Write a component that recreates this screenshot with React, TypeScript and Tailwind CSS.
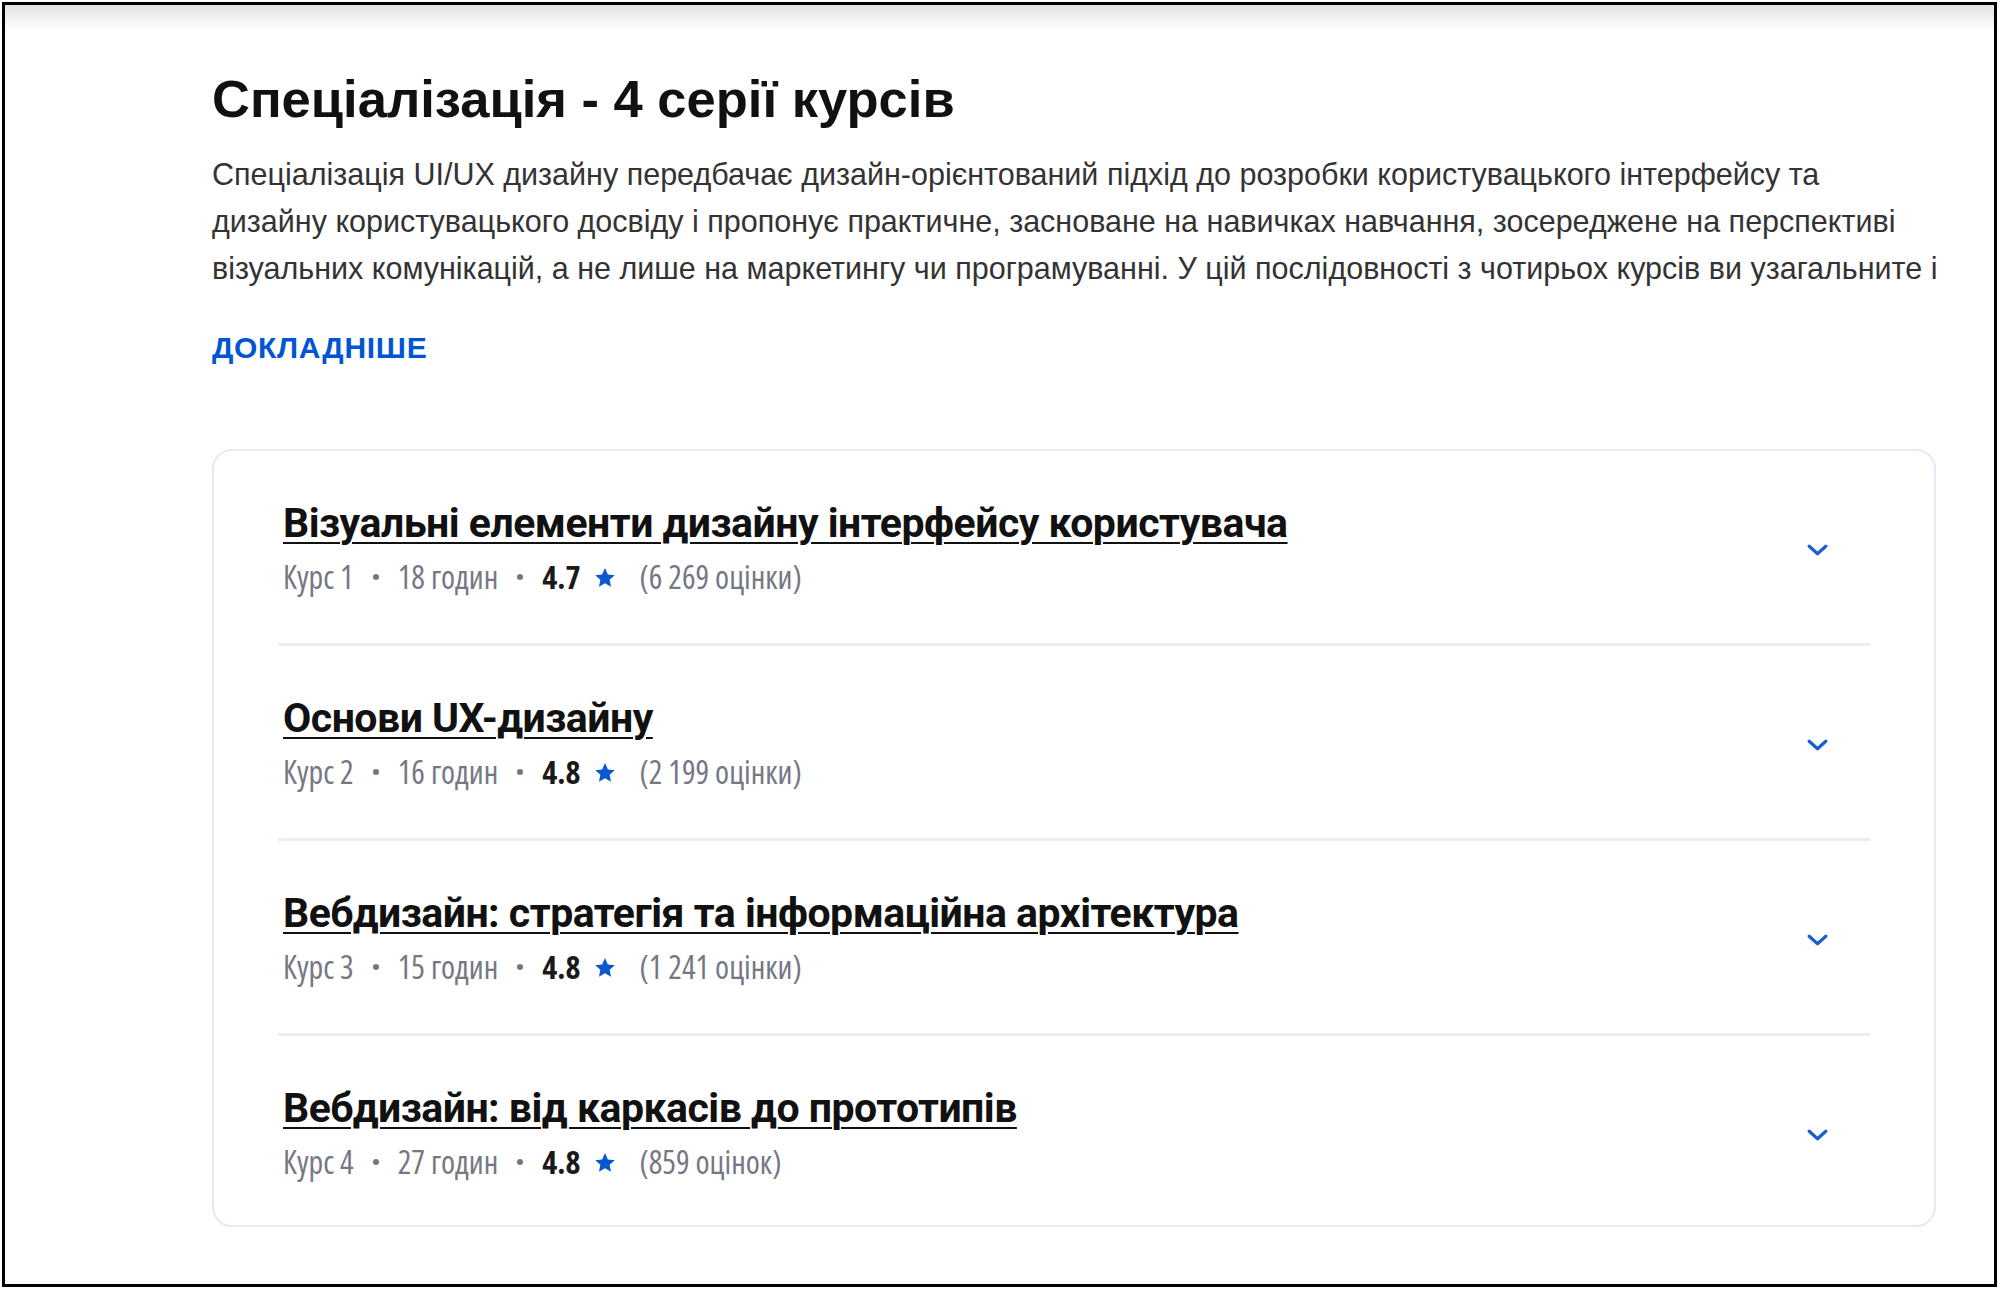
const courses = [
  { title: 'Візуальні елементи дизайну інтерфейсу користувача', n: 1, hours: 18, rating: '4.7', votes: '6 269 оцінки' },
  { title: 'Основи UX-дизайну', n: 2, hours: 16, rating: '4.8', votes: '2 199 оцінки' },
  { title: 'Вебдизайн: стратегія та інформаційна архітектура', n: 3, hours: 15, rating: '4.8', votes: '1 241 оцінки' },
  { title: 'Вебдизайн: від каркасів до прототипів', n: 4, hours: 27, rating: '4.8', votes: '859 оцінок' },
]

function Star() {
  return (
    <svg width="22" height="21" viewBox="0 0 24 23" className="shrink-0">
      <path
        d="M12 1.2l3.2 6.9 7.5.9-5.6 5.1 1.5 7.4L12 17.8l-6.6 3.7 1.5-7.4L1.3 9l7.5-.9z"
        fill="#0b57d0"
      />
    </svg>
  )
}

function Chevron() {
  return (
    <svg width="21" height="12" viewBox="0 0 21 12" fill="none">
      <path d="M2.2 2.2l8.3 7.6 8.3-7.6" stroke="#1a5fd0" strokeWidth="3.2" strokeLinecap="round" strokeLinejoin="round" />
    </svg>
  )
}

function Dot() {
  return <span className="h-[6px] w-[6px] shrink-0 rounded-full bg-[#74767f]" />
}

function CourseRow({ course, last }: { course: (typeof courses)[number]; last: boolean }) {
  return (
    <div
      className={`flex items-center justify-between pt-[43px] ${
        last ? 'pb-[43px]' : 'pb-[46px] border-b-[3px] border-[#e9edf5]'
      }`}
    >
      <div className="flex flex-col gap-[5px] pl-[5px]">
        <a
          href="#"
          className="font-['Roboto',sans-serif] text-[41px] leading-[58px] font-bold tracking-[-0.5px] text-[#111] underline decoration-[2px] underline-offset-[5px]"
        >
          {course.title}
        </a>
        <div className="flex items-center gap-[19px] font-['Open_Sans',sans-serif] text-[32px] leading-[40px] text-[#757884] font-stretch-[82%]">
          <span>Курс {course.n}</span>
          <Dot />
          <span>{course.hours} годин</span>
          <Dot />
          <span className="flex items-center gap-[13px]">
            <span className="font-bold text-[#1a1a1a]">{course.rating}</span>
            <Star />
          </span>
          <span className="ml-[5px]">({course.votes})</span>
        </div>
      </div>
      <button className="mr-[33px] mt-[8px] flex h-[40px] w-[40px] items-center justify-center">
        <Chevron />
      </button>
    </div>
  )
}

export default function App() {
  return (
    <div className="h-[1290px] w-[2000px] bg-white pt-[2px] pr-[3px] pb-[3px] pl-[2px]">
      <div className="h-full overflow-hidden border-[3px] border-black bg-white">
        <div className="h-[26px] bg-gradient-to-b from-[#e2e2e2] to-white" />
        <div className="ml-[207px] mt-[39px] w-[1724px] font-['Liberation_Sans',Arial,sans-serif]">
          <h2 className="text-[52.5px] leading-[58px] font-bold text-[#111]">
            Спеціалізація - 4 серії курсів
          </h2>
          <p className="mt-[23px] text-[30.5px] leading-[47px] whitespace-nowrap text-[#333]">
            Спеціалізація UI/UX дизайну передбачає дизайн-орієнтований підхід до розробки користувацького інтерфейсу та
            <br />
            дизайну користувацького досвіду і пропонує практичне, засноване на навичках навчання, зосереджене на перспективі
            <br />
            візуальних комунікацій, а не лише на маркетингу чи програмуванні. У цій послідовності з чотирьох курсів ви узагальните і
          </p>
          <button className="mt-[38px] block text-[30px] leading-[36px] font-bold tracking-[0.7px] text-[#0056d2]">
            ДОКЛАДНІШЕ
          </button>

          <div className="mt-[83px] rounded-[20px] border-2 border-[#e6e9f1] px-[64px]">
            {courses.map((c, i) => (
              <CourseRow key={c.n} course={c} last={i === courses.length - 1} />
            ))}
          </div>
        </div>
      </div>
    </div>
  )
}
